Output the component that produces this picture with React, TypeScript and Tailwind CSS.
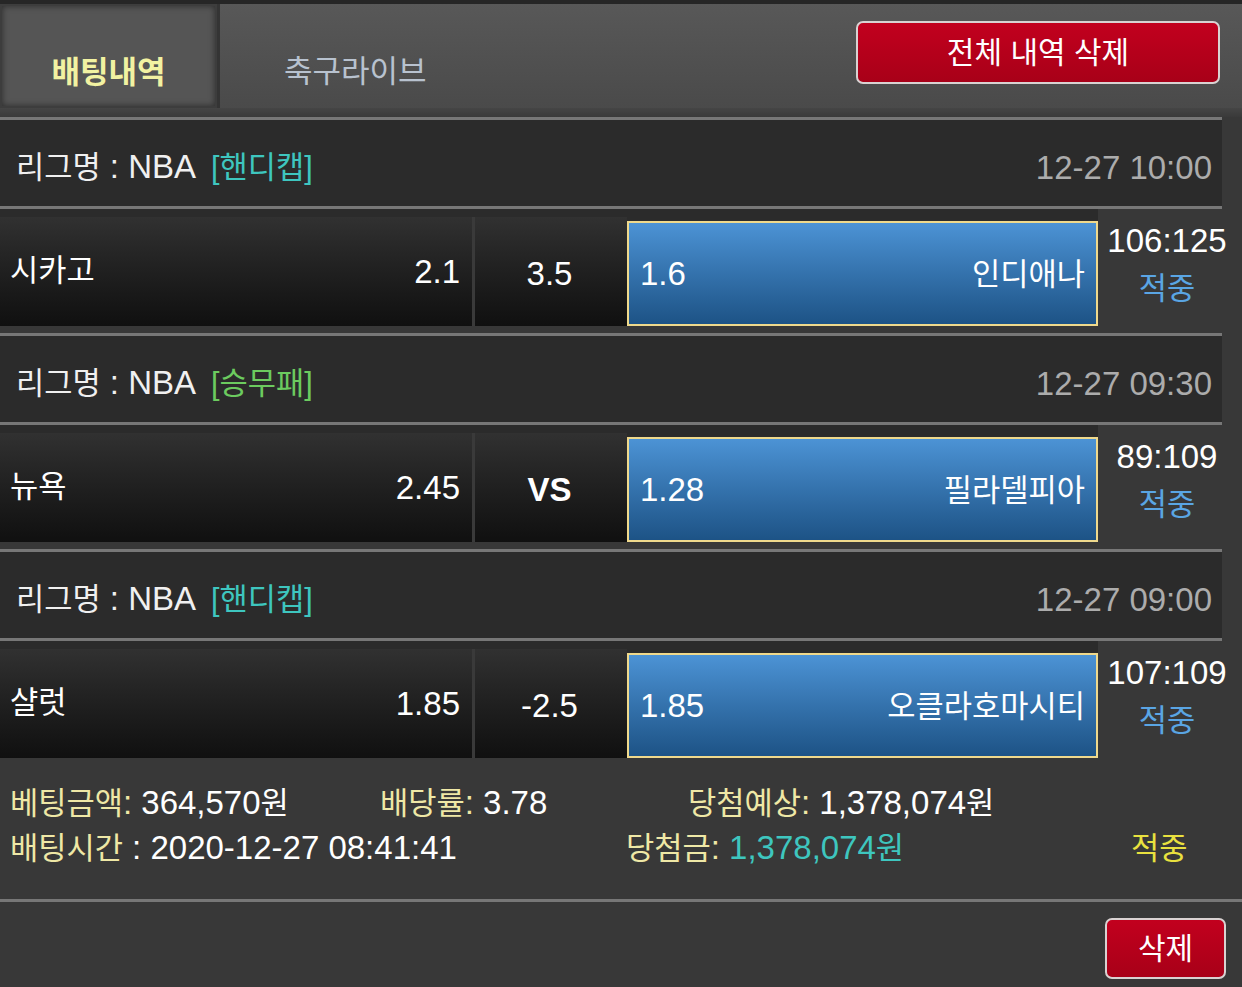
import React from "react";

const K = ({ children }: { children: React.ReactNode }) => (
  <span className="text-[0.93em]">{children}</span>
);

type Game = {
  type: string;
  typeColor: string;
  date: string;
  home: string;
  homeOdd: string;
  mid: string;
  midBold?: boolean;
  awayOdd: string;
  away: string;
  score: string;
};

const games: Game[] = [
  {
    type: "[핸디캡]",
    typeColor: "text-[#3ec6bf]",
    date: "12-27 10:00",
    home: "시카고",
    homeOdd: "2.1",
    mid: "3.5",
    awayOdd: "1.6",
    away: "인디애나",
    score: "106:125",
  },
  {
    type: "[승무패]",
    typeColor: "text-[#6ccb5f]",
    date: "12-27 09:30",
    home: "뉴욕",
    homeOdd: "2.45",
    mid: "VS",
    midBold: true,
    awayOdd: "1.28",
    away: "필라델피아",
    score: "89:109",
  },
  {
    type: "[핸디캡]",
    typeColor: "text-[#3ec6bf]",
    date: "12-27 09:00",
    home: "샬럿",
    homeOdd: "1.85",
    mid: "-2.5",
    awayOdd: "1.85",
    away: "오클라호마시티",
    score: "107:109",
  },
];

function GameBlock({ g }: { g: Game }) {
  return (
    <div className="flex flex-col">
      <div className="h-[3px] w-[1222px] bg-[#777777]" />
      <div className="h-[86px] w-[1222px] bg-[#2b2b2b] flex items-center pl-[16px] pr-[10px] pt-[8px]">
        <span className="text-[#f0f0f0]">
          <K>리그명</K> : NBA
        </span>
        <span className={`ml-[15px] ${g.typeColor}`}>
          <K>{g.type}</K>
        </span>
        <span className="ml-auto text-[#acacac]">{g.date}</span>
      </div>
      <div className="h-[3px] w-[1222px] bg-[#777777]" />
      <div className="flex h-[117px]">
        <div className="w-[1098px] bg-[#2b2b2b] pt-[8px] flex">
          <div className="w-[472px] h-[109px] bg-gradient-to-b from-[#313131] to-[#101010] flex items-center pl-[10px] pr-[12px] text-white">
            <K>{g.home}</K>
            <span className="ml-auto">{g.homeOdd}</span>
          </div>
          <div className="w-[3px] h-[109px] bg-[#3a3a3a]" />
          <div
            className={`w-[149px] h-[109px] bg-gradient-to-b from-[#313131] to-[#101010] flex items-center justify-center text-white pt-[4px] ${
              g.midBold ? "font-bold text-[33px]" : ""
            }`}
          >
            {g.mid}
          </div>
          <div className="w-[3px] h-[109px] bg-gradient-to-b from-[#313131] to-[#101010]" />
          <div className="w-[471px] h-[105px] self-end border-2 border-[#efd98c] bg-gradient-to-b from-[#4c93d5] to-[#1d5386] flex items-center pl-[11px] pr-[11px] text-white">
            <span>{g.awayOdd}</span>
            <span className="ml-auto">
              <K>{g.away}</K>
            </span>
          </div>
        </div>
        <div className="flex-1 flex flex-col items-center pt-[12px] pr-[6px]">
          <div className="h-[40px] leading-[40px] text-white">{g.score}</div>
          <div className="h-[54px] leading-[54px] text-[#5aa5e4]">
            <K>적중</K>
          </div>
        </div>
      </div>
      <div className="h-[7px]" />
    </div>
  );
}

export default function App() {
  return (
    <div
      className="w-[1242px] h-[987px] overflow-hidden bg-[#383838] text-[33px] leading-none"
      style={{ fontFamily: "'Liberation Sans', 'Noto Sans CJK KR', sans-serif" }}
    >
      {/* Header */}
      <div className="h-[117px] flex flex-col">
        <div className="h-[4px] bg-[#262626]" />
        <div className="h-[104px] flex bg-gradient-to-b from-[#585858] to-[#4a4a4a]">
          <div className="w-[217px] h-[104px] bg-[#555555] border-2 border-[#3d3d3d] shadow-[inset_0_0_6px_rgba(0,0,0,0.5)] flex items-center justify-center pt-[33px]">
            <span className="font-bold text-[31px] text-[#f2f2a2]">배팅내역</span>
          </div>
          <div className="w-[3px] h-[104px] bg-[#343434]" />
          <div className="ml-[64px] flex items-center pt-[30px]">
            <span className="text-[31px] text-[#b8c2cf]">축구라이브</span>
          </div>
          <div className="ml-auto mr-[22px] mt-[17px] w-[364px] h-[63px] rounded-[7px] border-2 border-[#d9d2d2] bg-gradient-to-b from-[#c2001e] to-[#a80018] flex items-center justify-center">
            <span className="text-[30px] text-white">전체 내역 삭제</span>
          </div>
        </div>
        <div className="h-[9px] bg-gradient-to-b from-[#454545] to-[#3a3a3a]" />
      </div>

      {games.map((g, i) => (
        <GameBlock key={i} g={g} />
      ))}

      {/* Footer info */}
      <div className="pt-[15px] pb-[29px] pl-[10px] flex flex-col">
        <div className="h-[45px] flex items-center">
          <div className="w-[370px]">
            <span className="text-[#efe8a6]">
              <K>베팅금액</K>:
            </span>
            <span className="text-white">
              {" "}
              364,570<K>원</K>
            </span>
          </div>
          <div className="w-[308px]">
            <span className="text-[#efe8a6]">
              <K>배당률</K>:
            </span>
            <span className="text-white"> 3.78</span>
          </div>
          <div>
            <span className="text-[#efe8a6]">
              <K>당첨예상</K>:
            </span>
            <span className="text-white">
              {" "}
              1,378,074<K>원</K>
            </span>
          </div>
        </div>
        <div className="h-[45px] flex items-center">
          <div className="w-[616px]">
            <span className="text-[#efe8a6]">
              <K>배팅시간</K>
            </span>
            <span className="text-white"> : 2020-12-27 08:41:41</span>
          </div>
          <div className="w-[505px]">
            <span className="text-[#efe8a6]">
              <K>당첨금</K>:
            </span>
            <span className="text-[#3ec6bf]">
              {" "}
              1,378,074<K>원</K>
            </span>
          </div>
          <div className="text-[#e9e13f]">
            <K>적중</K>
          </div>
        </div>
      </div>
      <div className="h-[3px] bg-[#777777]" />
      <div className="flex justify-end pr-[16px] pt-[16px]">
        <div className="w-[121px] h-[61px] rounded-[7px] border-2 border-[#d9d2d2] bg-gradient-to-b from-[#c2001e] to-[#a80018] flex items-center justify-center">
          <span className="text-[30px] text-white">삭제</span>
        </div>
      </div>
    </div>
  );
}
